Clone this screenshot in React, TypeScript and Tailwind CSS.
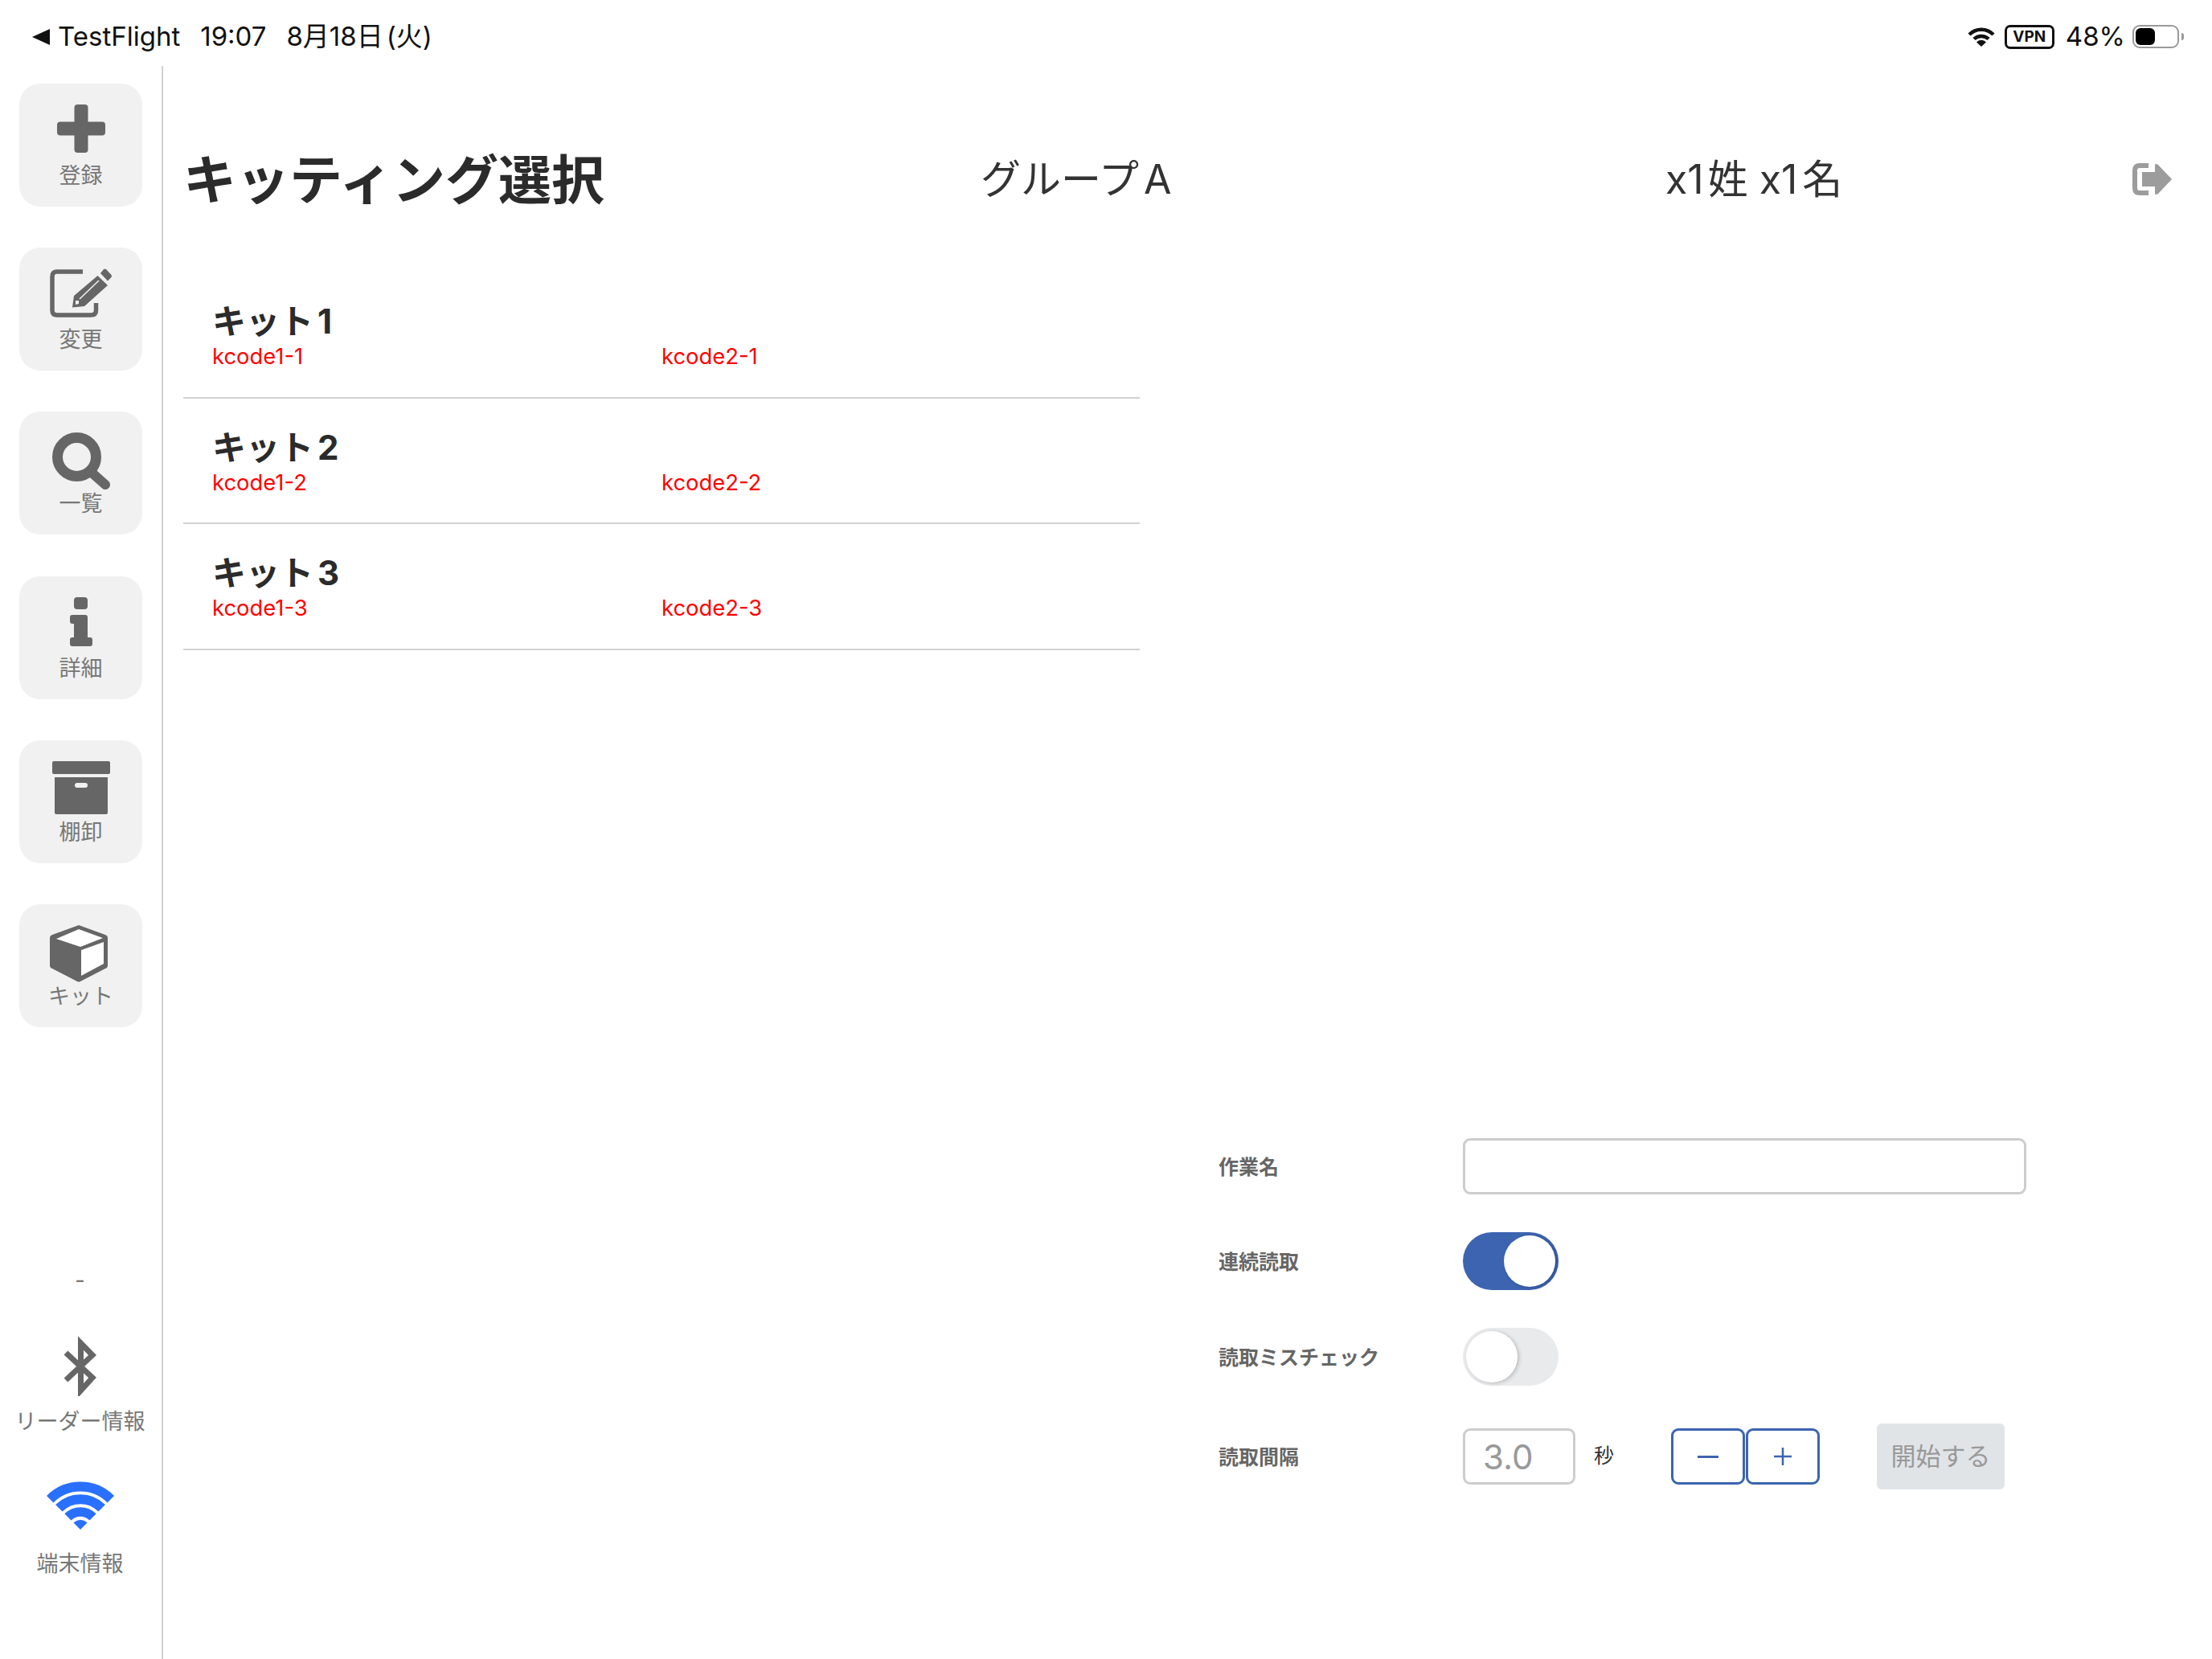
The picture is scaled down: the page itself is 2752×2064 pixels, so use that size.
import React from "react";

const FONT = "font-['Inter','Noto_Sans_CJK_JP',sans-serif]";

function Plus() {
  return (
    <svg viewBox="70 130 60 60" className="w-[60px] h-[60px]" fill="#666">
      <rect x="91.5" y="130" width="17" height="60" rx="4" />
      <rect x="70" y="151.5" width="60" height="17" rx="4" />
    </svg>
  );
}
function Edit() {
  return (
    <svg viewBox="62 334 78 62" className="w-[78px] h-[62px]">
      <path d="M103 338 H71 Q65 338 65 344 V386 Q65 392 71 392 H113 Q119.5 392 119.5 386 V377" fill="none" stroke="#666" strokeWidth="5.5" />
      <path d="M125 340 L129 335 Q130.5 334 132 335 L138.5 342 Q139.5 343.5 138.5 345 L134 349.5 Z" fill="#666" />
      <path d="M121.5 343 L134 355 L105 381 L90 382.5 L92 368 Z" fill="#666" />
      <path d="M99 372 L123 349" stroke="#f1f1f1" strokeWidth="1.6" />
      <path d="M94 374 L98 374 L98 378 L94 379 Z" fill="#f1f1f1" />
    </svg>
  );
}
function Search() {
  return (
    <svg viewBox="65 538 72 72" className="w-[72px] h-[72px]" fill="none" stroke="#666">
      <circle cx="95.5" cy="568.5" r="24" strokeWidth="13" />
      <path d="M113 587 L131 603" strokeWidth="12" strokeLinecap="round" />
    </svg>
  );
}
function Info() {
  return (
    <svg viewBox="87 742 28 61" className="w-[28px] h-[61px]" fill="#666">
      <rect x="92" y="742" width="17" height="15" rx="4" />
      <path d="M90 764 H106 Q109 764 109 767 V792 H112 Q115 792 115 795 V800 Q115 803 112 803 H90 Q87 803 87 800 V795 Q87 792 90 792 H92 V775 H90 Q87 775 87 772 V767 Q87 764 90 764 Z" />
    </svg>
  );
}
function Archive() {
  return (
    <svg viewBox="65 947 72 66" className="w-[72px] h-[66px]" fill="#666">
      <rect x="65" y="947" width="72" height="16" rx="2" />
      <path d="M68 967 H134 V1011 Q134 1013 132 1013 H70 Q68 1013 68 1011 Z" />
      <rect x="93" y="974" width="16" height="6" rx="3" fill="#f1f1f1" />
    </svg>
  );
}
function Cube() {
  return (
    <svg viewBox="62 1152 72 71" className="w-[72px] h-[71px] mr-[5px]">
      <path d="M98 1152 L131 1164 Q134 1165 134 1168 V1202 Q134 1205 131 1206 L100 1222 Q98 1223 96 1222 L65 1206 Q62 1205 62 1202 V1168 Q62 1165 65 1164 Z" fill="#666" />
      <path d="M98 1157 L128 1168 L100 1179 L70 1169 Z" fill="#fff" />
      <path d="M101 1183 L129 1173 V1200 L101 1215 Z" fill="#fff" />
    </svg>
  );
}
function Bluetooth() {
  return (
    <svg viewBox="79 1663 41 74" className="w-[41px] h-[74px]" fill="none" stroke="#666" strokeWidth="7">
      <path d="M82 1683 L115 1714 L100.5 1730 V1671 L115 1686 L82 1717" />
    </svg>
  );
}
function Wifi() {
  const color = "#2970ff";
  return (
    <svg viewBox="58 1843 84 60" className="w-[84px] h-[60px]" fill="none" stroke={color}>
      <path d="M62.2 1865.2 A53.5 53.5 0 0 1 137.8 1865.2" strokeWidth="12" />
      <path d="M73.3 1876.3 A37.75 37.75 0 0 1 126.7 1876.3" strokeWidth="12" />
      <path d="M84.4 1887.4 A22 22 0 0 1 115.6 1887.4" strokeWidth="11.5" />
      <path d="M100 1903 L91.5 1894.5 A12 12 0 0 1 108.5 1894.5 Z" fill={color} stroke="none" />
    </svg>
  );
}
function Logout() {
  return (
    <svg viewBox="2653 203 49 41" className="w-[49px] h-[41px] shrink-0">
      <path d="M2673 206 H2662 Q2656 206 2656 212 V234 Q2656 240 2662 240 H2673" fill="none" stroke="#9c9c9c" strokeWidth="6" />
      <path d="M2665 214 H2681 V205 Q2682 203 2685 205 L2702 223 L2685 241 Q2682 243 2681 241 V232 H2665 Z" fill="#9c9c9c" />
    </svg>
  );
}

function NavButton({ icon, label }: { icon: React.ReactNode; label: string }) {
  return (
    <div className="w-[153px] h-[153px] ml-[24px] mb-[51.2px] rounded-[26px] bg-[#f1f1f1] flex flex-col items-center pt-[26px]">
      <div className="h-[73px] flex items-start justify-center">{icon}</div>
      <div className="h-[32px] leading-[32px] text-[27px] text-[#777] whitespace-nowrap">{label}</div>
    </div>
  );
}

function Kit({ n }: { n: number }) {
  return (
    <div className="h-[156.5px] border-b-2 border-[#d2d2d2] pl-[36px] pt-[36px]">
      <div className="h-[50px] leading-[50px] text-[42px] font-bold text-[#2b2b2b] [word-spacing:-5px]">キット {n}</div>
      <div className="flex h-[36px] leading-[36px] text-[27.4px] text-[#ff0000]">
        <div className="w-[559px]">kcode1-{n}</div>
        <div>kcode2-{n}</div>
      </div>
    </div>
  );
}

function Label({ children }: { children: React.ReactNode }) {
  return <div className="w-[304px] pt-[3px] text-[25px] font-bold text-[#666]">{children}</div>;
}

function Toggle({ on }: { on: boolean }) {
  return (
    <div
      className={
        on
          ? "w-[119px] h-[72px] rounded-full bg-[#3c64b1] flex items-center justify-end pr-[4px]"
          : "w-[119px] h-[72px] rounded-full bg-[#e9eaec] flex items-center justify-start pl-[4px]"
      }
    >
      <div className="w-[64px] h-[64px] rounded-full bg-white shadow-[2px_1px_5px_rgba(0,0,0,0.2)]" />
    </div>
  );
}

export default function App() {
  return (
    <div className={`w-[2752px] h-[2064px] bg-white flex flex-col overflow-hidden ${FONT}`}>
      <div className="h-[82px] shrink-0 flex items-center text-[33px] text-[#111] pt-[9px]">
        <svg viewBox="0 0 22 20" className="w-[22px] h-[20px] ml-[40px]">
          <path d="M22 0 V20 L0 10 Z" fill="#111" />
        </svg>
        <span className="ml-[10px]">TestFlight</span>
        <span className="ml-[25px]">19:07</span>
        <span className="ml-[25px]">8月18日<span className="ml-[4px]">(火)</span></span>
        <div className="ml-auto flex items-center">
          <svg viewBox="0 0 34 24" className="w-[34px] h-[24px]">
            <g fill="none" stroke="#111">
              <path d="M2 9 A21 21 0 0 1 32 9" strokeWidth="4.5" />
              <path d="M8 14.5 A13 13 0 0 1 26 14.5" strokeWidth="4.5" />
            </g>
            <path d="M17 24 L11 18.5 A8 8 0 0 1 23 18.5 Z" fill="#111" />
          </svg>
          <div className="ml-[12px] w-[62px] h-[30px] rounded-[7px] border-[3px] border-[#111] flex items-center justify-center text-[19px] font-bold leading-none">
            VPN
          </div>
          <span className="ml-[14px]">48%</span>
          <div className="ml-[9px] w-[58px] h-[29px] rounded-[9px] border-2 border-[#999] p-[2px]">
            <div className="w-[24px] h-full rounded-[6px] bg-black" />
          </div>
          <div className="ml-[3px] w-[3px] h-[9px] rounded-r-full bg-[#999] mr-[35px]" />
        </div>
      </div>

      <div className="flex-1 flex min-h-0">
        <aside className="w-[203px] shrink-0 border-r-2 border-[#d0d0d0] flex flex-col pt-[22px]">
          <NavButton icon={<Plus />} label="登録" />
          <NavButton icon={<Edit />} label="変更" />
          <NavButton icon={<Search />} label="一覧" />
          <NavButton icon={<Info />} label="詳細" />
          <NavButton icon={<Archive />} label="棚卸" />
          <NavButton icon={<Cube />} label="キット" />
          <div className="mt-auto pb-[102px] flex flex-col items-center text-[27px] text-[#777] leading-[32px] pr-[2px]">
            <div className="h-[32px]">-</div>
            <div className="mt-[54px]"><Bluetooth /></div>
            <div className="mt-[16px] whitespace-nowrap h-[32px]">リーダー情報</div>
            <div className="mt-[58px]"><Wifi /></div>
            <div className="mt-[27px] h-[32px]">端末情報</div>
          </div>
        </aside>

        <main className="flex-1 flex flex-col min-w-0">
          <div className="mt-[91px] h-[100px] flex items-center text-[50px] text-[#333]">
            <h1 className="ml-[25px] w-[992px] pt-[2px] text-[66px] font-bold text-[#2b2b2b] whitespace-nowrap">キッティング選択</h1>
            <div className="w-[852px] whitespace-nowrap">グループ<span className="ml-[6px]">A</span></div>
            <div className="w-[581px] whitespace-nowrap">
              x1<span className="ml-[5px]">姓</span> x1<span className="ml-[6px]">名</span>
            </div>
            <Logout />
          </div>

          <div className="mt-[66px] ml-[25px] w-[1190px]">
            <Kit n={1} />
            <Kit n={2} />
            <Kit n={3} />
          </div>

          <div className="mt-auto ml-[1313px] pb-[211px] flex flex-col gap-[47px]">
            <div className="flex items-center">
              <Label>作業名</Label>
              <input readOnly className="w-[701px] h-[70px] border-[3px] border-[#cdcdcd] rounded-[9px] bg-white" />
            </div>
            <div className="flex items-center">
              <Label>連続読取</Label>
              <Toggle on />
            </div>
            <div className="flex items-center">
              <Label>読取ミスチェック</Label>
              <Toggle on={false} />
            </div>
            <div className="flex items-center h-[82px]">
              <Label>読取間隔</Label>
              <input
                readOnly
                value="3.0"
                className="w-[140px] h-[70px] border-[3px] border-[#cdcdcd] rounded-[9px] bg-white pl-[22px] text-[42px] text-[#999]"
              />
              <div className="ml-[23px] w-[25px] text-[25px] text-[#333]">秒</div>
              <div className="ml-[71px] w-[92px] h-[70px] border-[3px] border-[#3c64b1] rounded-[9px] flex items-center justify-center">
                <div className="w-[26px] h-[3px] bg-[#3c64b1]" />
              </div>
              <div className="ml-[1px] w-[92px] h-[70px] border-[3px] border-[#3c64b1] rounded-[9px] flex items-center justify-center">
                <svg viewBox="0 0 24 24" className="w-[24px] h-[24px]">
                  <path d="M12 1 V23 M1 12 H23" stroke="#3c64b1" strokeWidth="2.5" />
                </svg>
              </div>
              <button className="ml-[71px] w-[159px] h-[82px] rounded-[6px] bg-[#e1e4e7] text-[31px] text-[#999]">開始する</button>
            </div>
          </div>
        </main>
      </div>
    </div>
  );
}
